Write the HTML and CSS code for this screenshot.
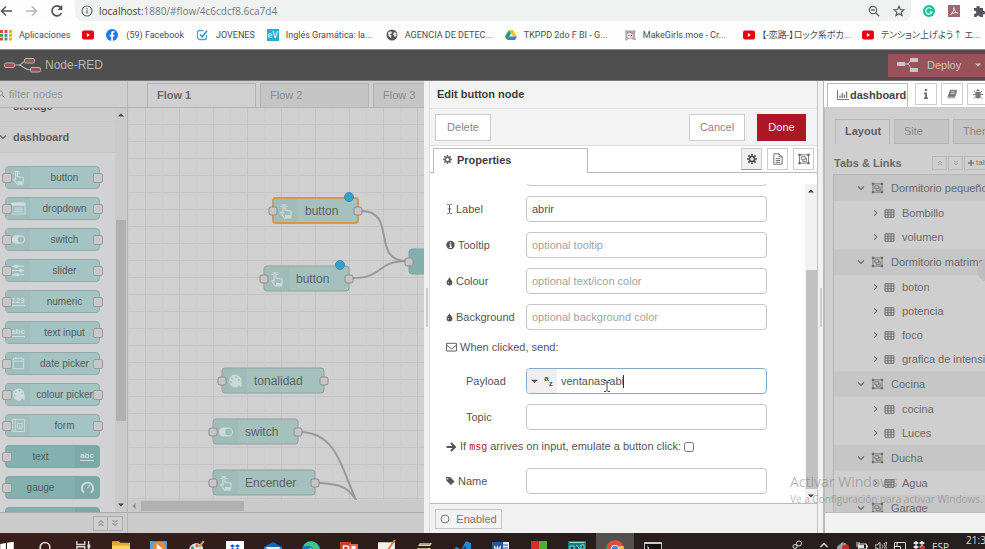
FILE: index.html
```html
<!DOCTYPE html>
<html lang="es">
<head>
<meta charset="utf-8">
<title>Node-RED</title>
<link rel="stylesheet" href="styles.css">
</head>
<body>
<svg class="sprite" aria-hidden="true">
  <symbol id="i-hand" viewBox="0 0 16 16"><path d="M5 9V2.500c0-1.300 1.900-1.300 1.900 0V7l5 .8c1 .2 1.400.8 1.300 1.800L12.600 15H6.500L3 10.500c-.6-1 .8-1.800 2-.5z" fill="none" stroke="currentColor" stroke-width="1.200"/><path d="M2.500 3.500h1.500M8 3.500h1.500M3.500 1l1 1M8.500 1l-1 1" stroke="currentColor" fill="none"/><path d="M7 12h5v3H7z" fill="currentColor"/></symbol>
  <symbol id="i-list" viewBox="0 0 16 16"><path d="M1 2h14v12H1z" fill="none" stroke="currentColor"/><path d="M1 2h14v3H1z" fill="currentColor"/><path d="M3.500 7.500h9M3.500 9.500h9M3.500 11.500h9" stroke="currentColor"/></symbol>
  <symbol id="i-toggle" viewBox="0 0 16 16"><rect x="1" y="3.500" width="14" height="9" rx="4.500" fill="currentColor"/><circle cx="10.500" cy="8" r="3.300" fill="#9bbdba"/></symbol>
  <symbol id="i-sliders" viewBox="0 0 16 16"><path d="M1 3.500h13M1 8h13M1 12.500h13" stroke="currentColor" stroke-width="1.200"/><path d="M5 1.500l-3 2 3 2zM10 6l3.500 2-3.500 2zM5 10.500l-3 2 3 2z" fill="currentColor"/><circle cx="6" cy="3.500" r="1.800" fill="currentColor"/><circle cx="10" cy="8" r="1.800" fill="currentColor"/><circle cx="7" cy="12.500" r="1.800" fill="currentColor"/></symbol>
  <symbol id="i-date" viewBox="0 0 16 16"><path d="M2.500 2.500h11v11h-11zM2.500 5.500h11M5 1v2.500M11 1v2.500" fill="none" stroke="currentColor"/></symbol>
  <symbol id="i-palette" viewBox="0 0 16 16"><path fill-rule="evenodd" d="M8 1.500a6.500 6.500 0 0 1 6.500 6.500v6l-3-2-1 2.200A6.500 6.500 0 1 1 8 1.500zM5 4.500a1 1 0 1 0 0 2 1 1 0 1 0 0-2zM9 3a1 1 0 1 0 0 2 1 1 0 1 0 0-2zM4 8a1 1 0 1 0 0 2 1 1 0 1 0 0-2zM12 6a1 1 0 1 0 0 2 1 1 0 1 0 0-2z" fill="currentColor"/></symbol>
  <symbol id="i-form" viewBox="0 0 16 16"><path d="M1.500 1.500h13v13h-13zM4.500 1.500v13M7 6h5v5H7zM9.500 8v3" fill="none" stroke="currentColor"/></symbol>
  <symbol id="i-gauge" viewBox="0 0 16 16"><path d="M4.200 13.500a6 6 0 1 1 7.600 0" fill="none" stroke="currentColor" stroke-width="2"/><path d="M8 9l2.500-4" stroke="currentColor" stroke-width="1.200"/></symbol>
  <symbol id="i-cog" viewBox="0 0 16 16"><g fill="none" stroke="currentColor"><circle cx="8" cy="8" r="4.200" stroke-width="3"/><path d="M8 0v3M8 13v3M0 8h3M13 8h3M2.300 2.300l2.200 2.200M11.500 11.500l2.200 2.200M13.700 2.300l-2.200 2.200M4.500 11.500l-2.200 2.200" stroke-width="2.600"/></g></symbol>
  <symbol id="i-file" viewBox="0 0 16 16"><path d="M2.500 1h7l4 4v10h-11zM9.500 1v4h4M5 7.500h6M5 10h6M5 12.500h6" fill="none" stroke="currentColor" stroke-width="1.200"/></symbol>
  <symbol id="i-group" viewBox="0 0 16 16"><path d="M2 2.500h12v11H2zM4.500 5h5v4h-5zM9.500 7h2v4.500h-5V9" fill="none" stroke="currentColor" stroke-width="1.100"/><path d="M.5 1h3v3h-3zM12.500 1h3v3h-3zM.5 12h3v3h-3zM12.500 12h3v3h-3z" fill="currentColor"/></symbol>
  <symbol id="i-table" viewBox="0 0 16 16"><path d="M1.500 2.500h13v11h-13zM1.500 6h13M1.500 9.800h13M5.800 2.500v11M10.200 2.500v11" fill="none" stroke="currentColor" stroke-width="1.400"/></symbol>
  <symbol id="i-down" viewBox="0 0 8 8"><path d="M1 2.500l3 3 3-3" fill="none" stroke="currentColor" stroke-width="1.200"/></symbol>
  <symbol id="i-right" viewBox="0 0 8 8"><path d="M2.500 1l3 3-3 3" fill="none" stroke="currentColor" stroke-width="1.200"/></symbol>
  <symbol id="i-ddown" viewBox="0 0 8 8"><path d="M1.500 1L4 3.500 6.500 1M1.500 4L4 6.500 6.500 4" fill="none" stroke="currentColor"/></symbol>
  <symbol id="i-dup" viewBox="0 0 8 8"><path d="M1.500 4L4 1.500 6.500 4M1.500 7L4 4.500 6.500 7" fill="none" stroke="currentColor"/></symbol>
  <symbol id="i-tint" viewBox="2 0 12 16"><path d="M8 1c.8 3.500 5 5.500 5 9.500a5 5 0 0 1-10 0C3 6.500 7.200 4.500 8 1z" fill="currentColor"/><path d="M6.800 9.500c.8 1.500 0 3-1.200 2.500s-.2-1.500 1.200-2.500z" fill="#fff"/></symbol>
  <symbol id="i-search" viewBox="0 0 16 16"><circle cx="6.500" cy="6.500" r="4.700" fill="none" stroke="currentColor" stroke-width="1.800"/><path d="M10 10l5 5" stroke="currentColor" stroke-width="2"/></symbol>
  <symbol id="i-yt" viewBox="0 0 12 12"><rect y="1.500" width="12" height="9" rx="2" fill="#e8000b"/><path d="M4.800 4v4L8 6z" fill="#fff"/></symbol>
  <symbol id="i-up-arrow" viewBox="0 0 6 6"><path d="M0 4.500L3 1.500l3 3z" fill="currentColor"/></symbol>
  <symbol id="i-dropbox" viewBox="0 0 12 10"><path d="M3 0l3 2-3 2-3-2zM9 0l3 2-3 2-3-2zM3 4l3 2-3 2-3-2zM9 4l3 2-3 2-3-2z" fill="currentColor"/></symbol>
</svg>

<div class="urlbar">
  <svg class="nav-ico" viewBox="0 0 14 14"><path d="M12 7H1.500M6 2.500L1.500 7 6 11.500" fill="none" stroke="#505356" stroke-width="1.500"/></svg>
  <svg class="nav-ico dim" viewBox="0 0 14 14"><path d="M1 7h10.500M7 2.500l4.500 4.500L7 11.500" fill="none" stroke="#b3b5b8" stroke-width="1.500"/></svg>
  <svg class="nav-ico" viewBox="0 0 14 14"><path d="M11.500 9A5 5 0 1 1 10.800 3.600" fill="none" stroke="#505356" stroke-width="1.700"/><path d="M12.300 1v5H7.500z" fill="#505356"/></svg>
  <div class="omnibox">
    <svg class="info-ico" viewBox="0 0 12 12"><circle cx="6" cy="6" r="5" fill="none" stroke="#5f6368" stroke-width="1.100"/><path d="M6 5.200v3.300M6 3v1.200" stroke="#5f6368" stroke-width="1.200"/></svg>
    <span class="url"><b>localhost:</b>1880/#flow/4c6cdcf8.6ca7d4</span>
    <svg class="omni-ico" viewBox="0 0 12 12"><circle cx="5" cy="5" r="3.700" fill="none" stroke="#5f6368" stroke-width="1.200"/><path d="M7.700 7.700l3.500 3.500M3.200 5h3.600" stroke="#5f6368" stroke-width="1.300"/></svg>
    <svg class="omni-ico" viewBox="0 0 12 12"><path d="M6 1.300l1.400 3.200 3.500.3-2.700 2.300.9 3.400L6 8.700l-3.100 1.800.9-3.400L1.100 4.800l3.500-.3z" fill="none" stroke="#505356" stroke-width="1.100"/></svg>
  </div>
  <svg class="ext" viewBox="0 0 12 12"><circle cx="6" cy="6" r="6" fill="#15c39a"/><path d="M8.500 4A3.200 3.200 0 1 0 9 7H6.500" fill="none" stroke="#fff" stroke-width="1.200"/></svg>
  <svg class="ext" viewBox="0 0 12 12"><path d="M0 0h12v12H0z" fill="#9b6a70"/><path d="M2.500 9.500C5 8 6.500 4 5.800 2.500c1 4 2 5 4 5.500-2.500-.8-5 0-7.300 1.500z" fill="none" stroke="#f0dcdc"/></svg>
  <svg class="ext" viewBox="0 0 12 12"><path d="M1 3h2.500a1.700 1.700 0 1 1 3.300 0H10v3a1.700 1.700 0 1 1 0 3.300V12H6.800a1.600 1.600 0 1 0-3.200 0H1V8.800a1.600 1.600 0 1 0 0-3z" fill="#55585c"/></svg>
</div>

<nav class="bookmarks" aria-label="Marcadores">
  <a href="#" class="bm apps"><svg viewBox="0 0 12 12"><path d="M0 1h3v3H0zM0 8.500h3v3H0z" fill="#e04a3f"/><path d="M4.500 1h3v3h-3z" fill="#e04a3f"/><path d="M0 4.800h3v3H0zM4.500 8.500h3v3h-3z" fill="#35a853"/><path d="M4.500 4.800h3v3h-3z" fill="#4285f4"/><path d="M9 1h3v3H9zM9 4.800h3v3H9zM9 8.500h3v3H9z" fill="#f4b400"/></svg><span>Aplicaciones</span></a>
  <a href="#" class="bm" aria-label="YouTube"><svg><use href="#i-yt"/></svg></a>
  <a href="#" class="bm"><svg viewBox="0 0 12 12"><circle cx="6" cy="6" r="6" fill="#1877f2"/><path d="M5.200 12V7.500H3.700V5.700h1.500V4.400c0-1.600.9-2.300 2.200-2.300h1.100v1.600h-.8c-.7 0-.8.4-.8.800v1.200h1.600l-.3 1.800H6.900V12z" fill="#fff"/></svg><span>(59) Facebook</span></a>
  <a href="#" class="bm"><svg viewBox="0 0 12 12"><path d="M10.500 6v2.500a2 2 0 0 1-2 2h-5a2 2 0 0 1-2-2v-5a2 2 0 0 1 2-2h4" fill="none" stroke="#48a7c9" stroke-width="1.300"/><path d="M4 5.500l2.200 2.300L11 1.800" fill="none" stroke="#2b94bb" stroke-width="1.500"/></svg><span>JOVENES</span></a>
  <a href="#" class="bm long"><span class="ev">eV</span><span>Inglés Gramática: la...</span></a>
  <a href="#" class="bm long"><svg viewBox="0 0 12 12"><circle cx="6" cy="6" r="5.500" fill="#55585c"/><path d="M2 3.500L5 2l1 2-2 1.500 1.500 1L5 9 2.500 7zM8 3l2.500 1v3L8.500 8 8 6 7 5.500z" fill="#e8e8e8"/></svg><span>AGENCIA DE DETEC...</span></a>
  <a href="#" class="bm long"><svg viewBox="0 0 12 12"><path d="M4 1h4l4 6.500H8z" fill="#f6c52c"/><path d="M4 1l2 3.300L2.200 11 0 7.500z" fill="#1c9e58"/><path d="M4.200 7.500H12L10 11H2.200z" fill="#3f79e0"/></svg><span>TKPPD 2do F BI - G...</span></a>
  <a href="#" class="bm long"><svg viewBox="0 0 12 12"><path d="M1 1l3 .5h5L11.500 1 11 7l1 4H9l-1-1H4l-1 2-2-1.500.5-3z" fill="#b8a9b0"/><circle cx="6" cy="6.500" r="3" fill="#eedcd8"/><path d="M3 4.500l2-2 4 2" stroke="#8f7d88" fill="none"/><path d="M4.500 6.500h1M7 6.500h1" stroke="#735d6b"/></svg><span>MakeGirls.moe - Cr...</span></a>
  <a href="#" class="bm long" lang="ja"><svg><use href="#i-yt"/></svg><span>【-恋路-】ロック系ボカ...</span></a>
  <a href="#" class="bm long" lang="ja"><svg><use href="#i-yt"/></svg><span>テンション上げよう↑ エ...</span></a>
</nav>

<header class="header">
  <svg class="logo" viewBox="0 0 38 16"><path d="M10 8h4c5 0 4-4 8-4M14 8c6 0 5 5 13 5" fill="none" stroke="#b5b5b5" stroke-width="1.200"/><g fill="#9c5357" stroke="#b5b5b5"><rect x=".5" y="6" width="10" height="4.500" rx="1.500"/><rect x="20.500" y="1.500" width="10" height="4.500" rx="1.500"/><rect x="26.500" y="10.500" width="10" height="4.500" rx="1.500"/></g></svg>
  <h1>Node-RED</h1>
  <button class="deploy" type="button">
    <svg viewBox="0 0 22 14"><path d="M7 6h3c3 0 2-4 5-4M10 6c4 0 2 5 5 5" fill="none" stroke="#cfc3c3"/><path d="M0 4h8v4H0zM13 0h8v4h-8zM13 10h8v4h-8z" fill="#cfc3c3"/></svg>
    <span>Deploy</span>
    <svg class="caret" viewBox="0 0 6 6"><path d="M0 1.500h6l-3 3z" fill="#cfc3c3"/></svg>
  </button>
</header>

<main class="main">
  <aside class="palette">
    <label class="filter"><svg><use href="#i-search"/></svg><input type="text" placeholder="filter nodes" aria-label="filter nodes"></label>
    <div class="palette-body">
      <div class="palette-list">
        <h2 class="cat cut"><svg><use href="#i-down"/></svg>storage</h2>
        <h2 class="cat"><svg><use href="#i-down"/></svg>dashboard</h2>
        <ul class="pnodes">
          <li class="pnode both"><i><svg><use href="#i-hand"/></svg></i><span>button</span></li>
          <li class="pnode both"><i><svg><use href="#i-list"/></svg></i><span>dropdown</span></li>
          <li class="pnode both"><i><svg><use href="#i-toggle"/></svg></i><span>switch</span></li>
          <li class="pnode both"><i><svg><use href="#i-sliders"/></svg></i><span>slider</span></li>
          <li class="pnode both"><i><b>123</b></i><span>numeric</span></li>
          <li class="pnode both"><i><b>abc</b></i><span>text input</span></li>
          <li class="pnode both"><i><svg><use href="#i-date"/></svg></i><span>date picker</span></li>
          <li class="pnode both"><i><svg><use href="#i-palette"/></svg></i><span>colour picker</span></li>
          <li class="pnode both"><i><svg><use href="#i-form"/></svg></i><span>form</span></li>
          <li class="pnode out"><span>text</span><i><b>abc</b></i></li>
          <li class="pnode out"><span>gauge</span><i><svg><use href="#i-gauge"/></svg></i></li>
          <li class="pnode out"><span></span><i></i></li>
        </ul>
      </div>
      <div class="vscroll dim"><svg><use href="#i-up-arrow"/></svg><div class="thumb"></div><svg class="flip"><use href="#i-up-arrow"/></svg></div>
    </div>
    <div class="foot palette-foot"><button type="button" aria-label="Collapse all"><svg><use href="#i-dup"/></svg></button><button type="button" aria-label="Expand all"><svg><use href="#i-ddown"/></svg></button></div>
  </aside>

  <section class="workspace">
    <div class="ws-tabs"><a href="#" class="on">Flow 1</a><a href="#">Flow 2</a><a href="#">Flow 3</a></div>
    <svg class="chart">
      <defs><pattern id="grid" x="0" y="0" width="34" height="17" patternUnits="userSpaceOnUse"><path class="gl" d="M17.500 0v17M0 16.500h34"/><path class="gl faint" d="M.5 0v17"/></pattern></defs>
      <rect width="100%" height="100%" fill="url(#grid)"/>
      <g class="wires"><path d="M233 103C270 103 242 153 279 153"/><path d="M225 170C256 170 248 153 279 153"/><path d="M174 324C208 326 213 358 228 392"/><path d="M191 375C214 376 220 380 228 392"/></g>
      <g class="node selected" transform="translate(145,90)"><rect class="box" width="85" height="25" rx="3"/><path class="shade" d="M1 1h24v23H1z"/><use href="#i-hand" x="5" y="5" width="16" height="16"/><text x="32" y="17">button</text><rect class="port" x="-4" y="9" width="8" height="8" rx="2"/><rect class="port" x="81" y="9" width="8" height="8" rx="2"/><circle cx="76" cy="-1" r="4.500"/></g>
      <g class="node" transform="translate(136,158)"><rect class="box" width="85" height="25" rx="3"/><path class="shade" d="M1 1h24v23H1z"/><use href="#i-hand" x="5" y="5" width="16" height="16"/><text x="32" y="17">button</text><rect class="port" x="-4" y="9" width="8" height="8" rx="2"/><rect class="port" x="81" y="9" width="8" height="8" rx="2"/><circle cx="76" cy="-1" r="4.500"/></g>
      <g class="node" transform="translate(94,260)"><rect class="box" width="102" height="25" rx="3"/><path class="shade" d="M1 1h24v23H1z"/><use href="#i-palette" x="5" y="5" width="16" height="16"/><text x="32" y="17">tonalidad</text><rect class="port" x="-4" y="9" width="8" height="8" rx="2"/><rect class="port" x="98" y="9" width="8" height="8" rx="2"/></g>
      <g class="node" transform="translate(85,311)"><rect class="box" width="85" height="25" rx="3"/><path class="shade" d="M1 1h24v23H1z"/><use href="#i-toggle" x="5" y="5" width="16" height="16"/><text x="32" y="17">switch</text><rect class="port" x="-4" y="9" width="8" height="8" rx="2"/><rect class="port" x="81" y="9" width="8" height="8" rx="2"/></g>
      <g class="node" transform="translate(85,362)"><rect class="box" width="102" height="25" rx="3"/><path class="shade" d="M1 1h24v23H1z"/><use href="#i-hand" x="5" y="5" width="16" height="16"/><text x="32" y="17">Encender</text><rect class="port" x="-4" y="9" width="8" height="8" rx="2"/><rect class="port" x="98" y="9" width="8" height="8" rx="2"/></g>
      <g class="node dark" transform="translate(281,141)"><rect class="box" width="85" height="25" rx="3"/><rect class="port" x="-4" y="9" width="8" height="8" rx="2"/></g>
    </svg>
    <div class="hscroll"><svg><use href="#i-up-arrow"/></svg><div class="thumb"></div></div>
    <div class="foot"></div>
  </section>

  <section class="tray">
    <div class="grip"></div>
    <div class="tray-main">
      <h2 class="tray-title">Edit button node</h2>
      <div class="tray-tools"><button type="button">Delete</button><button type="button" class="push">Cancel</button><button type="button" class="primary">Done</button></div>
      <div class="tray-tabs"><a href="#" class="on"><svg><use href="#i-cog"/></svg>Properties</a>
        <button type="button" class="active" aria-label="Properties"><svg><use href="#i-cog"/></svg></button><button type="button" aria-label="Description"><svg><use href="#i-file"/></svg></button><button type="button" aria-label="Appearance"><svg><use href="#i-group"/></svg></button></div>
      <div class="tray-body">
        <form class="form">
          <div class="row first"><label for="f-icon"></label><input id="f-icon" type="text" aria-label="Icon"></div>
          <div class="row"><label for="f-label"><svg viewBox="0 0 8 14" class="narrow"><path d="M1 1.500c2 0 3 .5 3 1.500v8c0 1-1 1.500-3 1.500M7 1.500C5 1.500 4 2 4 3v8c0 1 1 1.500 3 1.500M2 7h4" fill="none" stroke="currentColor"/></svg>Label</label><input id="f-label" type="text" value="abrir"></div>
          <div class="row"><label for="f-tip"><svg viewBox="0 0 10 10"><circle cx="5" cy="5" r="4.700" fill="currentColor"/><path d="M5 1.800v1.500M3.800 4.700H5.300v3M3.800 7.700h2.700" stroke="#fff" stroke-width="1.300" fill="none"/></svg>Tooltip</label><input id="f-tip" type="text" placeholder="optional tooltip"></div>
          <div class="row"><label for="f-col"><svg class="narrow"><use href="#i-tint"/></svg>Colour</label><input id="f-col" type="text" placeholder="optional text/icon color"></div>
          <div class="row"><label for="f-bg"><svg class="narrow"><use href="#i-tint"/></svg>Background</label><input id="f-bg" type="text" placeholder="optional background color"></div>
          <div class="note"><svg viewBox="0 0 12 10"><path d="M.6 1h10.800v8.400H.6zM.6 3l5.400 4 5.400-4" fill="none" stroke="currentColor"/></svg>When clicked, send:</div>
          <div class="row"><label for="f-pay" class="indent">Payload</label>
            <div class="typed"><button type="button" aria-label="Type"><svg viewBox="0 0 6 6"><path d="M0 1.500h6l-3 3z" fill="currentColor"/></svg><span class="az"><span>a</span><span>z</span></span></button><input id="f-pay" type="text" value="ventanas-abi"><span class="textcaret"></span><svg class="ibeam" viewBox="0 0 8 12"><path d="M1 .5h2l1 1 1-1h2M4 1.500v9M1 11.500h2l1-1 1 1h2" fill="none" stroke="#444"/></svg></div></div>
          <div class="row"><label for="f-topic" class="indent">Topic</label><input id="f-topic" type="text"></div>
          <div class="note"><svg viewBox="0 0 10 10"><path d="M0 5h8M4.500 1l4 4-4 4" fill="none" stroke="currentColor" stroke-width="2"/></svg><label for="f-pass">If <code>msg</code> arrives on input, emulate a button click:</label><input id="f-pass" type="checkbox"></div>
          <div class="row"><label for="f-name"><svg viewBox="0 0 10 10"><path fill-rule="evenodd" d="M0 .5h4.500L9.500 5.500 5.500 9.500.5 4.800zM2 1.600a.8.800 0 1 0 0 1.600.8.800 0 1 0 0-1.600z" fill="currentColor"/></svg>Name</label><input id="f-name" type="text"></div>
        </form>
        <div class="vscroll form-scroll"><svg><use href="#i-up-arrow"/></svg><div class="thumb"></div><svg class="flip"><use href="#i-up-arrow"/></svg></div>
      </div>
      <div class="tray-foot"><button type="button"><svg viewBox="0 0 10 10"><circle cx="5" cy="5" r="4" fill="none" stroke="currentColor"/></svg>Enabled</button></div>
    </div>
  </section>

  <div class="separator"></div>

  <aside class="sidebar">
    <div class="side-tabs"><a href="#" class="on"><svg viewBox="0 0 12 10"><path d="M.5 0v9.500H12" fill="none" stroke="currentColor"/><path d="M3 8V5.500M5.200 8V3M7.400 8V4.500M9.600 8V1.500" stroke="currentColor" stroke-width="1.300"/></svg>dashboard</a>
      <button type="button" aria-label="info"><svg viewBox="0 0 10 10"><path d="M3.800 0h2.400v2H3.800zM3 3.500h3v4.700h1V10H3V8.200h1V5.300H3z" fill="currentColor"/></svg></button>
      <button type="button" aria-label="help"><svg viewBox="0 0 12 10"><path d="M3.500.5h8L9 8H1.500c-1 0-1 1.500 0 1.500h7.300L11.500 2" fill="none" stroke="currentColor"/><path d="M3.500.5h8L9 7.500H1z" fill="currentColor"/><path d="M5 2.500h4.500M4.500 4.500H9" stroke="#fff" stroke-width=".8"/></svg></button>
      <button type="button" aria-label="debug"><svg viewBox="0 0 10 10"><path d="M3.300 2a1.700 1.700 0 0 1 3.400 0zM2.500 2.800h5V7a2.500 2.500 0 0 1-5 0z" fill="currentColor"/><path d="M0 5.500h10M.8 1.800l2 2M9.200 1.800l-2 2M1 9.500l2-2M9 9.500l-2-2" stroke="currentColor"/></svg></button></div>
    <div class="side-body">
      <div class="sub-tabs"><a href="#" class="on">Layout</a><a href="#">Site</a><a href="#">Theme</a></div>
      <div class="links-head"><h3>Tabs &amp; Links</h3><button type="button" aria-label="Collapse"><svg><use href="#i-dup"/></svg></button><button type="button" aria-label="Expand"><svg><use href="#i-ddown"/></svg></button><button type="button" class="add"><svg viewBox="0 0 6 6"><path d="M3 0v6M0 3h6" stroke="currentColor" stroke-width="1.600"/></svg>tab</button></div>
      <ul class="tree">
        <li class="grp"><svg class="chev"><use href="#i-down"/></svg><svg><use href="#i-group"/></svg>Dormitorio pequeño</li>
        <li><svg class="chev"><use href="#i-right"/></svg><svg><use href="#i-table"/></svg>Bombillo</li>
        <li><svg class="chev"><use href="#i-right"/></svg><svg><use href="#i-table"/></svg>volumen</li>
        <li class="grp"><svg class="chev"><use href="#i-down"/></svg><svg><use href="#i-group"/></svg>Dormitorio matrimonial</li>
        <li><svg class="chev"><use href="#i-right"/></svg><svg><use href="#i-table"/></svg>boton</li>
        <li><svg class="chev"><use href="#i-right"/></svg><svg><use href="#i-table"/></svg>potencia</li>
        <li><svg class="chev"><use href="#i-right"/></svg><svg><use href="#i-table"/></svg>foco</li>
        <li><svg class="chev"><use href="#i-right"/></svg><svg><use href="#i-table"/></svg>grafica de intensidad</li>
        <li class="grp"><svg class="chev"><use href="#i-down"/></svg><svg><use href="#i-group"/></svg>Cocina</li>
        <li><svg class="chev"><use href="#i-right"/></svg><svg><use href="#i-table"/></svg>cocina</li>
        <li><svg class="chev"><use href="#i-right"/></svg><svg><use href="#i-table"/></svg>Luces</li>
        <li class="grp"><svg class="chev"><use href="#i-down"/></svg><svg><use href="#i-group"/></svg>Ducha</li>
        <li><svg class="chev"><use href="#i-right"/></svg><svg><use href="#i-table"/></svg>Agua</li>
        <li class="grp"><svg class="chev"><use href="#i-down"/></svg><svg><use href="#i-group"/></svg>Garage</li>
      </ul>
    </div>
    <div class="side-foot"></div>
    <span class="touch"></span>
  </aside>
</main>

<div class="watermark"><strong>Activar Windows</strong><span>Ve a Configuración para activar Windows.</span></div>

<footer class="taskbar">
  <div class="apps-row">
    <span><svg viewBox="0 0 16 16"><path d="M2 3.500l5-.8V8H2zM8 2.500l6-1V8H8zM2 9h5v5l-5-.8zM8 9h6v6l-6-1z" fill="#fff"/></svg></span>
    <span><svg viewBox="0 0 16 16"><circle cx="8" cy="6.500" r="4.300" fill="none" stroke="#ddd" stroke-width="1.400"/></svg></span>
    <span><svg viewBox="0 0 16 16"><path d="M2.500 1v3h7V1M2.500 14V6h7v8M13 1v13" fill="none" stroke="#ddd" stroke-width="1.200"/><path d="M12 4h2.500v3H12z" fill="#ddd"/></svg></span>
    <span><svg viewBox="0 0 16 16"><path d="M0 1h6l1.500 1.500H16V15H0z" fill="#e3a92f"/><path d="M0 5h16v10H0z" fill="#f8d56a"/></svg></span>
    <span><svg viewBox="0 0 16 16"><path d="M0 1h15v14H0z" fill="#5aa5d8"/><circle cx="8" cy="7" r="5.500" fill="#f08a25"/><path d="M6 3.500v8l5-4z" fill="#fff"/></svg></span>
    <span><svg viewBox="0 0 16 16"><path d="M1 9c0-4 4-7 8-6s5 4 4 6-3 0-4 2 0 4-2 4-6-2-6-6z" fill="#d8e8ee"/><circle cx="4" cy="7" r="1.400" fill="#3aa655"/><circle cx="8" cy="5" r="1.400" fill="#e5534b"/><path d="M10 6l4-5" stroke="#d99348" stroke-width="2"/></svg></span>
    <span><svg viewBox="0 0 18 16"><path d="M0 0h18v16H0z" fill="#fff"/><use href="#i-dropbox" x="4" y="3" width="10" height="9" color="#0d63e6"/></svg></span>
    <span><svg viewBox="0 0 18 16"><path d="M0 6l9-5 9 5v10H0z" fill="#1169bd"/><path d="M2 6h14v4H2z" fill="#e8f3fb"/><path d="M0 6l9 5 9-5v10H0z" fill="#2a8fe0"/></svg></span>
    <span><svg viewBox="0 0 18 16"><circle cx="9" cy="9" r="9" fill="#1478c8"/><path d="M1 6c3-8 15-7 17 2 0 3-4 3-7 2 2-4-5-7-10-4z" fill="#42c589"/><path d="M6 10c0-3 4-4 5 0z" fill="#d9f0fa"/></svg></span>
    <span><svg viewBox="0 0 18 16"><path d="M0 1h11v14H0z" fill="#c8402a"/><path d="M9 3h9v13H9z" fill="#e8654a"/><path d="M3.500 11V5h3a1.800 1.800 0 0 1 0 4h-3" fill="none" stroke="#fff" stroke-width="1.500"/><path d="M11.500 5h4v4h-4z" fill="#fff"/></svg></span>
    <span><svg viewBox="0 0 16 16"><path d="M0 2h15v13H0z" fill="#f3efe9"/><path d="M15 0L8 10" stroke="#e07a35" stroke-width="1.600"/></svg></span>
    <span><svg viewBox="0 0 18 16"><path d="M4 2h12l-2 3H2zM2 7h13l-2 2H0z" fill="#e6ddad"/><path d="M4 3h10M3 8h9" stroke="#6c6a55"/></svg></span>
    <span><svg viewBox="0 0 18 16"><path d="M12 0l5 2v14l-4 0-6-6-4 3-2-1v-5l2-1 4 3z" fill="#2489ca"/><path d="M12 5v8L7 9z" fill="#16415e"/></svg></span>
    <span><svg viewBox="0 0 18 16"><path d="M8 1h9v14H8z" fill="#e9eef6"/><path d="M10 4h6M10 7h6M10 10h6" stroke="#2b579a"/><path d="M0 1h11v14H0z" fill="#2b579a"/><path d="M2.500 5l1.500 6 1.500-5L7 11l1.500-6" fill="none" stroke="#fff" stroke-width="1.200"/></svg></span>
    <span><svg viewBox="0 0 18 16"><path d="M1 0h8v9H1z" fill="#d3302b"/><path d="M9 0h8v9H9z" fill="#4fae36"/><path d="M1 9h16v7H1z" fill="#a51f1c"/></svg></span>
    <span><svg viewBox="0 0 18 16"><path d="M0 0h18v16H0z" fill="#0f7c8c"/><path d="M1.500 1.500h15M2 5h4v5H2zM8 4l3 3-2 3M13 4h3v4h-3z" stroke="#8be1e6" fill="#123d48"/></svg></span>
    <span class="current"><svg viewBox="0 0 18 18"><circle cx="9" cy="9" r="9" fill="#dd4f3e"/><path d="M0 6l5 6 4 6A9 9 0 0 1 0 6z" fill="#2da14e"/><path d="M18 9a9 9 0 0 1-9 9l4-8V6h4.500z" fill="#fbc32e"/><circle cx="9" cy="9" r="4" fill="#fff"/><circle cx="9" cy="9" r="3.200" fill="#4286f3"/></svg></span>
    <span><svg viewBox="0 0 18 16"><path d="M.5 1.500h17V16H.5z" fill="#111" stroke="#bbb"/><path d="M.5 1h17v2H.5z" fill="#ccc"/><path d="M3 5.500l2 1.500-2 1.500M7 9h3" stroke="#ddd" fill="none"/></svg></span>
  </div>
  <div class="status">
    <svg class="people" viewBox="0 0 12 12"><circle cx="8" cy="3.500" r="2.500" fill="none" stroke="#ddd"/><circle cx="4" cy="6.500" r="2" fill="none" stroke="#ddd"/><path d="M0 12c1-3 6-3 7 0" stroke="#ddd" fill="none"/></svg>
    <svg viewBox="0 0 12 12"><path d="M2.500 7L6 3.500 9.500 7" fill="none" stroke="#ddd" stroke-width="1.300"/></svg>
    <svg viewBox="0 0 12 12"><path d="M0 8c0-3 3-3 4-5 3-1 5 0 6 2 3 1 2 5 0 5H2C0 10 0 9 0 8z" fill="#9c9c9c"/><circle cx="8.500" cy="8" r="3.500" fill="#c42b2b"/></svg>
    <svg viewBox="0 0 12 12"><path d="M2.500 4h8v5h-8zM11.500 5.500v2M1 2v5M3 2v2" fill="none" stroke="#ddd"/><path d="M3 5h5v3H3z" fill="#ddd"/></svg>
    <svg viewBox="0 0 12 12"><path d="M0 5h2l3-2.500v8L2 8H0zM7 4.500c1 1 1 3 0 4M9 3c1.500 2 1.500 5 0 7M11 2c1.500 3 1.500 6 0 9" fill="none" stroke="#ddd"/></svg>
    <svg viewBox="0 0 12 12"><path d="M.5 2.500h11v8H.5zM3 2.500v4M.5 6.500h6v4" fill="none" stroke="#ddd"/></svg>
    <svg viewBox="0 0 12 12"><use href="#i-dropbox" y="1" width="12" height="10" color="#e8e8e8"/><circle cx="9.500" cy="8.500" r="2.500" fill="#c42b2b"/></svg>
    <span class="lang">ESP</span><span class="clock">21:34</span>
  </div>
</footer>
</body>
</html>
```
FILE: styles.css
```css
* { box-sizing: border-box; }
html, body { height: 100%; }
body {
  margin: 0;
  display: flex;
  flex-direction: column;
  overflow: hidden;
  position: relative;
  font: 11px/14px "Liberation Sans", Arial, sans-serif;
  color: #555;
  background: #fff;
}
svg { display: block; flex: none; }
.sprite { position: absolute; width: 0; height: 0; }
a { color: inherit; text-decoration: none; }
button, input { font: inherit; color: inherit; margin: 0; }
button { padding: 0; display: flex; align-items: center; justify-content: center; }
h1, h2, h3, ul { margin: 0; padding: 0; font-size: 11px; }
ul { list-style: none; }

/* browser chrome */
.urlbar { flex: none; height: 21px; display: flex; align-items: center; background: #fdfdfd; }
.nav-ico { width: 14px; height: 14px; margin-right: 11px; }
.omnibox {
  flex: 1; height: 21px; margin-right: 12px; padding: 0 6px;
  display: flex; align-items: center;
  background: #f0f2f2; border-radius: 0 0 8px 8px;
}
.info-ico { width: 12px; height: 12px; margin-right: 6px; }
.url { flex: 1; font: 10px/14px "Open Sans", sans-serif; color: #75787b; }
.url b { font-weight: 400; color: #3d4043; }
.omni-ico { width: 12px; height: 12px; margin-left: 13px; }
.ext { width: 12px; height: 12px; margin-right: 13px; }
.ext:last-child { margin-right: 0; }

.bookmarks {
  flex: none; height: 29px; display: flex; align-items: center; overflow: hidden;
  border-bottom: 1px solid #8c8c8c; background: #fefefe;
  font: 9px/14px Roboto, "Noto Sans CJK JP", sans-serif; color: #4a4d50;
}
.bm { flex: none; display: flex; align-items: center; gap: 8px; margin-right: 12px; white-space: nowrap; }
.bm svg { width: 12px; height: 12px; }
.bm.apps { gap: 7px; }
.bm.long { width: 119px; margin: 0; gap: 7px; }
.bm:lang(ja) { font-feature-settings: "palt"; }
.ev { width: 12px; height: 12px; background: #29acd0; color: #fff; line-height: 12px; text-align: center; }

/* editor header */
.header { flex: none; height: 31px; display: flex; align-items: center; background: #4f4f4f; border-bottom: 1px solid #777; }
.logo { width: 38px; height: 16px; margin: 0 3px 0 4px; }
.header h1 { flex: 1; font-size: 12px; font-weight: 400; color: #b5b5b5; }
.deploy { width: 97px; height: 23px; border: 0; background: #97525a; color: #cfc3c3; justify-content: flex-start; padding-left: 9px; gap: 8px; overflow: hidden; }
.deploy svg { width: 22px; height: 14px; }
.deploy .caret { width: 6px; height: 6px; margin-left: 6px; }

.main { flex: 1; min-height: 0; display: flex; }
.foot { flex: none; height: 21px; border-top: 1px solid #aaa; background: #cbcbcb; }

/* palette */
.palette { flex: none; width: 128px; display: flex; flex-direction: column; background: #cecece; border-right: 1px solid #b5b5b5; }
.filter { flex: none; height: 27px; display: flex; align-items: center; border-bottom: 1px solid #b3b3b3; color: #8c8c8c; }
.filter svg { width: 8px; height: 8px; margin: 0 4px 0 -3px; }
.filter input { width: 100px; padding: 0; border: 0; outline: 0; background: none; }
.filter input::placeholder { color: #949994; }
.palette-body { flex: 1; min-height: 0; display: flex; }
.palette-list { flex: 1; overflow: hidden; background: #d2d1d3; }
.cat { height: 31px; display: flex; align-items: center; gap: 6px; background: #cdcdcd; border-bottom: 1px solid #c8c8c8; color: #5d5d5d; }
.cat svg { width: 8px; height: 8px; margin-left: -1px; }
.cat.cut { margin-top: -17px; }
.pnodes { padding: 13px 15px 0 5px; }
.pnode { position: relative; height: 23px; margin-bottom: 8px; display: flex; align-items: center; border: 1px solid #92a9a8; border-radius: 4px; background: #a4c3c3; font-size: 10px; color: #555c5c; }
.pnode span { flex: 1; text-align: center; }
.pnode i { width: 24px; align-self: stretch; display: flex; align-items: center; justify-content: center; font-style: normal; color: #cfdddd; background: #a0bebe; }
.pnode.out { background: #83b1af; border-color: #7ca5a3; }
.pnode.out i { background: #7ba9a7; }
.pnode i svg { width: 15px; height: 15px; }
.pnode b { font-size: 8px; line-height: 8px; border-bottom: 1px solid; }
.pnode::before, .pnode.both::after { content: ""; position: absolute; top: 6px; left: -4px; width: 8px; height: 8px; border: 1px solid #9c9c9c; border-radius: 2px; background: #c9c7ca; }
.pnode.both::after { left: auto; right: -4px; }
.vscroll { flex: none; width: 12px; display: flex; flex-direction: column; align-items: center; background: #f1f1f1; color: #444; }
.vscroll svg { width: 6px; height: 6px; margin: 4px 0; }
.vscroll.dim { background: #cacaca; }
.flip { transform: rotate(180deg); }
.thumb { background: #b0b0b0; }
.vscroll .thumb { width: 10px; }
.vscroll.dim .thumb { flex: 1; margin: 98px 0 77px; }
.palette-foot { display: flex; align-items: center; justify-content: flex-end; padding-right: 4px; }
.palette-foot button { width: 15px; height: 15px; border: 1px solid #adadad; background: #cfcfcf; color: #777; }
.palette-foot button + button { border-left: 0; }
.palette-foot svg { width: 8px; height: 8px; }

/* workspace */
.workspace { flex: 1; min-width: 0; display: flex; flex-direction: column; background: #cfcfcf; }
.ws-tabs { flex: none; height: 27px; display: flex; align-items: flex-end; gap: 4px; padding-left: 19px; border-bottom: 1px solid #b3b3b3; overflow: hidden; }
.ws-tabs a { flex: none; width: 109px; height: 24px; padding: 4px 9px; border: 1px solid #b3b3b3; border-bottom: 0; background: #c5c5c5; color: #8b8b8b; }
.ws-tabs .on { background: #d0d0d0; color: #6a6a6a; font-weight: 700; }
.chart { flex: 1; min-height: 0; width: 100%; background: #d0d0d0; overflow: hidden; }
.gl { stroke: #c4c4c4; fill: none; }
.gl.faint { stroke: #cdcdcd; }
.wires path { fill: none; stroke: #999; stroke-width: 2; }
.node { color: #ccdad9; font-size: 12px; }
.node .box { fill: #a5c1be; stroke: #929f9e; }
.node .shade { fill: #9fbcb9; }
.node text { fill: #5d6363; }
.node .port { fill: #c6c4c5; stroke: #8e8e8e; }
.node circle { fill: #36a3cc; stroke: #3f8caa; }
.node.selected .box { stroke: #d59650; stroke-width: 2; }
.node.dark .box { fill: #81b0ad; stroke: #7ba3a0; }
.hscroll { flex: none; height: 12px; display: flex; align-items: center; background: #cacaca; }
.hscroll svg { width: 6px; height: 6px; margin: 0 4px 0 3px; transform: rotate(-90deg); color: #8b8b8b; }
.hscroll .thumb { width: 103px; height: 10px; }

/* edit tray */
.tray { flex: none; width: 394px; display: flex; background: #fff; border-right: 1px solid #c3c3c3; }
.grip { flex: none; width: 6px; display: flex; align-items: center; background: #f1f1f1; border-right: 1px solid #ddd; }
.grip::before { content: ""; width: 2px; height: 39px; margin-left: 2px; background: #ccc; }
.tray-main { flex: 1; min-width: 0; display: flex; flex-direction: column; }
.tray-title { flex: none; height: 28px; padding: 6px 7px; background: #f3f3f3; border-bottom: 1px solid #e2e2e2; color: #3d3d3d; }
.tray-tools { flex: none; height: 37px; display: flex; align-items: center; padding: 0 11px 0 5px; gap: 12px; background: #f3f3f3; border-bottom: 1px solid #ddd; }
.tray-tools button { width: 56px; height: 27px; border: 1px solid #ccc; background: #fff; color: #888; }
.tray-tools .push { margin-left: auto; }
.tray-tools .primary { width: 49px; background: #ad1625; border-color: #ad1625; color: #eee; }
.tray-tabs { flex: none; height: 27px; display: flex; align-items: center; gap: 5px; padding: 0 3px; border-bottom: 1px solid #bbb; }
.tray-tabs .on { width: 155px; height: 25px; align-self: flex-end; margin: 0 auto -1px 0; padding: 0 0 3px 9px; display: flex; align-items: center; gap: 5px; border: 1px solid #bbb; border-bottom: 0; background: #fff; color: #3d3d3d; font-weight: 700; }
.tray-tabs svg { width: 9px; height: 9px; color: #666; }
.tray-tabs button { width: 21px; height: 22px; border: 1px solid #ccc; background: #fff; }
.tray-tabs button.active { background: #efefef; border-bottom-color: #999; }
.tray-tabs button svg { width: 12px; height: 12px; }
.tray-tabs button.active svg { width: 10px; height: 10px; color: #555; }
.tray-body { flex: 1; min-height: 0; display: flex; margin-top: 11px; overflow: hidden; }
.form { flex: 1; min-width: 0; padding: 0 38px 0 16px; overflow: hidden; display: flex; flex-direction: column; gap: 10px; }
.row { flex: none; height: 26px; display: flex; align-items: center; }
.row.first { margin-top: -24px; }
.row > label { width: 80px; display: flex; align-items: center; gap: 3px; }
.row > label.indent { padding-left: 20px; }
.row > label svg { width: 9px; height: 10px; }
.row > label svg.narrow { width: 7px; height: 12px; }
.row > input, .typed { flex: 1; min-width: 0; height: 26px; padding: 0 5px; border: 1px solid #c6c6c6; border-radius: 4px; background: #fff; outline: 0; }
.row input::placeholder { color: #a3a3a3; }
.typed { position: relative; display: flex; padding: 0; border-color: #86a9cc; }
.typed button { width: 30px; border: 0; border-radius: 3px 0 0 3px; background: #efefef; gap: 6px; }
.typed button svg { width: 7px; height: 7px; }
.az { display: flex; font-size: 8px; line-height: 8px; font-weight: 700; }
.az span:last-child { margin-top: 5px; }
.typed input { flex: 1; min-width: 0; padding: 0 4px; border: 0; outline: 0; background: none; }
.textcaret { position: absolute; left: 96px; top: 6px; width: 1px; height: 13px; background: #333; }
.ibeam { position: absolute; left: 76px; top: 11px; width: 8px; height: 12px; }
.note { flex: none; height: 14px; margin-bottom: 4px; display: flex; align-items: center; gap: 3px; }
.note svg { width: 11px; height: 10px; }
.note code { font: 10px/14px "Liberation Mono", monospace; color: #ad1625; }
.note input { width: 10px; height: 10px; }
.form-scroll .thumb { flex: 1; width: 11px; margin: 72px 0 0; background: #c1c1c1; }
.tray-foot { flex: none; height: 30px; padding: 5px; border-top: 1px solid #bbb; background: #f1f1f1; }
.tray-foot button { width: 67px; height: 20px; gap: 6px; border: 1px solid #c6c6c6; background: #f3f3f3; color: #777; }
.tray-foot svg { width: 10px; height: 10px; }

.separator { flex: none; width: 6px; display: flex; align-items: center; background: #f1f1f1; border-right: 1px solid #bbb; }
.separator::before { content: ""; width: 2px; height: 39px; margin-left: 2px; background: #ccc; }

/* sidebar */
.sidebar { position: relative; flex: none; width: 161px; display: flex; flex-direction: column; overflow: hidden; background: #cfcfcf; color: #6a6a6a; }
.side-tabs { flex: none; height: 27px; display: flex; align-items: center; gap: 4px; padding-left: 3px; background: #fff; border-bottom: 1px solid #ccc; color: #777; }
.side-tabs > * { flex: none; }
.side-tabs .on { width: 81px; height: 24px; align-self: flex-end; padding: 0 0 2px 9px; margin-right: 3px; display: flex; align-items: center; gap: 1px; overflow: hidden; border: 1px solid #bbb; border-bottom: 0; font-weight: 700; color: #444; }
.side-tabs .on svg { width: 12px; height: 10px; color: #777; }
.side-tabs button { width: 22px; height: 22px; border: 1px solid #ccc; background: #fff; }
.side-tabs button svg { width: 10px; height: 10px; }
.side-body { flex: 1; min-height: 0; overflow: hidden; border-left: 1px solid #bbb; }
.sub-tabs { display: flex; gap: 4px; margin-top: 11px; padding-left: 10px; height: 25px; }
.sub-tabs a { flex: none; width: 55px; padding: 4px 9px; border: 1px solid #b5b5b5; background: #c5c5c5; color: #868686; }
.sub-tabs .on { border-bottom: 0; background: #cfcfcf; color: #606060; font-weight: 700; }
.links-head { display: flex; align-items: center; height: 14px; margin: 12px 0 4px; padding-left: 9px; }
.links-head h3 { flex: none; width: 98px; }
.links-head button { flex: none; width: 15px; height: 14px; border: 1px solid #b8b8b8; background: none; color: #888; margin-right: 1px; }
.links-head svg { width: 6px; height: 6px; }
.links-head .add { width: 40px; justify-content: flex-start; padding-left: 3px; gap: 2px; font-size: 8px; color: #777; }
.tree { margin-left: 8px; border-left: 1px solid #b5b5b5; border-top: 1px solid #b5b5b5; }
.tree li { height: 24px; display: flex; align-items: center; padding-left: 38px; white-space: nowrap; }
.tree svg { width: 11px; height: 11px; margin: 0 7px 0 5px; }
.tree svg.chev { width: 7px; height: 8px; margin: 0; }
.tree .grp { height: 26px; padding-left: 23px; background: #c6c6c6; }
.tree .grp svg { width: 13px; height: 12px; margin: 0 7px 0 6px; }
.tree .grp svg.chev { width: 8px; height: 8px; margin: 0; }
.side-foot { flex: none; height: 21px; border: 1px solid #bbb; border-right: 0; border-bottom: 0; background: #f1f1f1; }
.touch { position: absolute; right: -16px; top: 177px; width: 24px; height: 24px; border-radius: 50%; background: #bdbfbf; }

/* desktop */
.watermark { position: absolute; left: 790px; top: 473px; display: flex; flex-direction: column; white-space: nowrap; font-family: "Open Sans", sans-serif; color: rgba(120, 120, 120, .5); }
.watermark strong { font-size: 14px; line-height: 18px; font-weight: 400; }
.watermark span { font-size: 10px; line-height: 16px; }
.taskbar { flex: none; height: 16px; display: flex; justify-content: space-between; overflow: hidden; background: linear-gradient(90deg, #391f1c, #2b1d1b 40%, #251f1f); color: #ddd; }
.apps-row { display: flex; margin-left: -12px; }
.apps-row span { width: 38px; height: 28px; padding-top: 7px; display: flex; justify-content: center; }
.apps-row span.current { background: #545050; }
.apps-row svg { width: 18px; height: 18px; }
.status { flex: none; width: 194px; display: flex; align-items: flex-start; gap: 7px; padding-top: 7px; overflow: hidden; white-space: nowrap; }
.status svg { width: 12px; height: 12px; }
.status .people { margin-right: 8px; }
.status span { flex: none; font: 10px/14px "Open Sans", sans-serif; }
.status .clock { margin: -7px 0 0 10px; }
```
